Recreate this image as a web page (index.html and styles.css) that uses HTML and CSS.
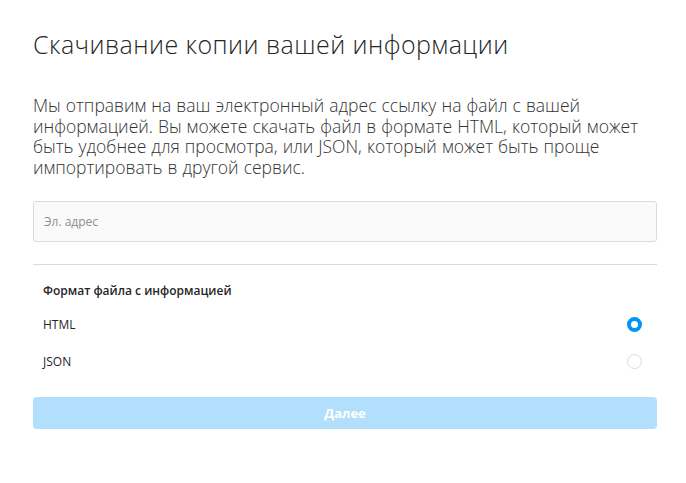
FILE: index.html
```html
<!DOCTYPE html>
<html>
<head>
<meta charset="UTF-8">
<title>Скачивание копии вашей информации</title>
<link rel="stylesheet" href="styles.css">
</head>
<body>
	<div class="container">
		<h1 class="title">Скачивание копии вашей информации</h1>
		<p class="intro">Мы отправим на ваш электронный адрес ссылку на файл с вашей информацией. Вы можете скачать файл в формате HTML, который может быть удобнее для просмотра, или JSON, который может быть проще импортировать в другой сервис.</p>

		<input class="email" type="text" placeholder="Эл. адрес">

		<div class="divider"></div>

		<div class="format">
			<div class="format-title">Формат файла с информацией</div>
			<label class="option">
				<span>HTML</span>
				<span class="radio checked"></span>
			</label>
			<label class="option">
				<span>JSON</span>
				<span class="radio"></span>
			</label>
		</div>

		<button class="next" disabled>Далее</button>
	</div>
</body>
</html>
```

FILE: styles.css
```css
body {
	margin: 0;
	background-color: #fff;
	font-family: "Open Sans", "Noto Sans", sans-serif;
	color: #262626;
}

.container {
	width: 624px;
	padding: 28px 29px 0 33px;
}

.title {
	margin: 0;
	font-size: 25px;
	font-weight: 300;
	line-height: 32px;
	letter-spacing: 0.45px;
}

.intro {
	margin: 35px 0 0;
	font-size: 17.5px;
	font-weight: 300;
	line-height: 20.5px;
	word-spacing: 0.5px;
	color: #333;
}

.email {
	display: block;
	box-sizing: border-box;
	width: 100%;
	height: 41px;
	margin-top: 24px;
	padding: 0 10px;
	background-color: #fafafa;
	border: 1px solid #dbdbdb;
	border-radius: 3px;
	font-family: inherit;
	font-size: 12px;
	outline: none;
}

.email::placeholder {
	color: #8e8e8e;
}

.divider {
	height: 1px;
	margin-top: 22px;
	background-color: #dbdbdb;
}

.format {
	padding: 18px 15px 0 10px;
}

.format-title {
	font-size: 12px;
	font-weight: 600;
	line-height: 16px;
}

.option {
	display: flex;
	justify-content: space-between;
	align-items: center;
	height: 37px;
	font-size: 12px;
}

.option:first-of-type {
	margin-top: 6.5px;
}

.radio {
	box-sizing: border-box;
	width: 15px;
	height: 15px;
	border: 1px solid #dbdbdb;
	border-radius: 50%;
}

.radio.checked {
	border: 4px solid #0095f6;
}

.next {
	display: block;
	width: 100%;
	height: 32px;
	margin-top: 17.5px;
	background-color: #b2dffc;
	border: none;
	border-radius: 4px;
	color: #fff;
	font-family: inherit;
	font-size: 13px;
	font-weight: 700;
}
```
